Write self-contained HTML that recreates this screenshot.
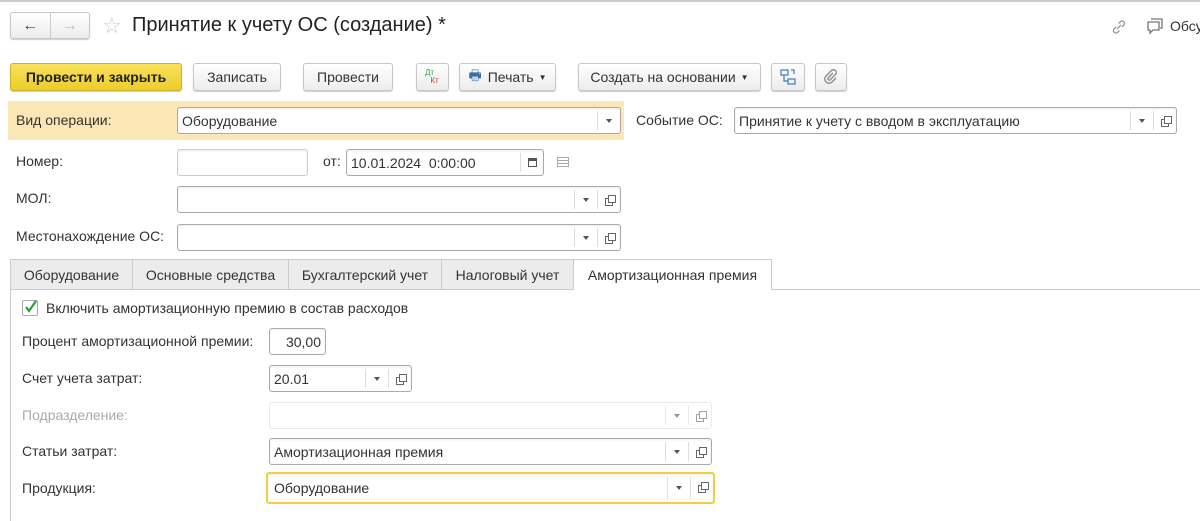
<!DOCTYPE html>
<html><head><meta charset="utf-8"><style>
*{box-sizing:border-box;margin:0;padding:0}
body{width:1200px;height:521px;background:#fff;position:relative;overflow:hidden;font-family:"Liberation Sans",Arial,sans-serif;font-size:14px;color:#333}
.a{position:absolute}
.btn{position:absolute;border:1px solid #c8c8c8;border-radius:3px;background:linear-gradient(#fff,#ececec);box-shadow:0 1px 1px rgba(0,0,0,.2);display:flex;align-items:center;justify-content:center;font-size:14px;color:#333}
.inp{position:absolute;border:1px solid #aaa;border-radius:3px;background:#fff;height:27px;display:flex;align-items:center;padding-left:4px;font-size:14px;color:#333;box-shadow:inset 0 1px 2px rgba(0,0,0,.08)}
.dd{position:absolute;top:3px;bottom:3px;width:23px;border-left:1px solid #ddd;display:flex;align-items:center;justify-content:center}
.dd::after{content:"";border-left:3px solid transparent;border-right:3px solid transparent;border-top:4px solid #555}
.op{position:absolute;top:3px;bottom:3px;width:23px;border-left:1px solid #ddd}
.op::before{content:"";position:absolute;left:7px;top:8px;width:6px;height:6px;border:1px solid #666}
.op::after{content:"";position:absolute;left:10px;top:5px;width:6px;height:6px;border:1px solid #666;background:#fff}
.lbl{position:absolute;font-size:14px;color:#333}
.tab{position:absolute;top:259px;height:30px;border:1px solid #ccc;border-bottom:none;background:#ececec;display:flex;align-items:center;justify-content:center;font-size:14px;color:#333}
</style></head><body>
<div class="a" style="left:0;top:0;width:1200px;height:2px;background:#ccc"></div>
<div class="btn" style="left:10px;top:12px;width:80px;height:27px;justify-content:flex-start">
 <span style="width:39px;text-align:center;font-size:16px;color:#444">&#8592;</span><span style="width:1px;height:25px;background:#ccc"></span><span style="width:39px;text-align:center;font-size:16px;color:#bbb">&#8594;</span></div>
<div class="a" style="left:102px;top:13px;font-size:22px;color:#ccc">&#9734;</div>
<div class="a" style="left:132px;top:14px;font-size:20px;color:#222">Принятие к учету ОС (создание) *</div>
<svg class="a" style="left:1110px;top:18px" width="18" height="18" viewBox="0 0 18 18" fill="none" stroke="#999" stroke-width="1.3"><path d="M7 11l4-4M6 9l-2 2a2.5 2.5 0 003.5 3.5l2-2M12 9l2-2a2.5 2.5 0 00-3.5-3.5l-2 2"/></svg>
<svg class="a" style="left:1145px;top:17px" width="20" height="18" viewBox="0 0 20 18" fill="none" stroke="#777" stroke-width="1.3"><path d="M6 2h11v9h-2M3 5h11v8H8l-3 3v-3H3z"/></svg>
<div class="a" style="left:1170px;top:18px;font-size:14px;color:#333">Обсу</div>

<div class="btn" style="left:10px;top:63px;width:172px;height:28px;background:linear-gradient(#f9e15a,#eccd2c);border-color:#cfb223;font-weight:bold;color:#222">Провести и закрыть</div>
<div class="btn" style="left:193px;top:63px;width:88px;height:28px">Записать</div>
<div class="btn" style="left:303px;top:63px;width:90px;height:28px">Провести</div>
<div class="btn" style="left:416px;top:63px;width:33px;height:28px;flex-direction:column;font-size:8px;line-height:8px"><span style="color:#3a3;margin-left:-6px">Дт</span><span style="color:#d33;margin-left:4px">Кт</span></div>
<div class="btn" style="left:459px;top:63px;width:97px;height:28px"><span style="color:#3b6ea5;margin-right:6px">&#128438;</span>Печать <span style="font-size:8px;margin-left:5px">&#9660;</span></div>
<div class="btn" style="left:578px;top:63px;width:183px;height:28px">Создать на основании <span style="font-size:8px;margin-left:5px">&#9660;</span></div>
<div class="btn" style="left:771px;top:63px;width:34px;height:28px"><svg width="18" height="18" viewBox="0 0 18 18" fill="none" stroke="#3b7bc0" stroke-width="1.2"><rect x="2" y="2" width="7" height="5"/><rect x="9" y="11" width="7" height="5"/><path d="M5 7v6h4M12 2h3v4"/></svg></div>
<div class="btn" style="left:815px;top:63px;width:32px;height:28px"><svg width="16" height="16" viewBox="0 0 16 16" fill="none" stroke="#888" stroke-width="1.3"><path d="M10 4l-5 5a1.5 1.5 0 002 2l6-6a3 3 0 00-4-4L3 7a4 4 0 006 6l4-4"/></svg></div>

<div class="a" style="left:8px;top:101px;width:616px;height:39px;background:#fbe7b5"></div>
<div class="lbl" style="left:16px;top:112px">Вид операции:</div>
<div class="inp" style="left:177px;top:107px;width:444px">Оборудование<div class="dd" style="right:0"></div></div>
<div class="lbl" style="left:636px;top:112px">Событие ОС:</div>
<div class="inp" style="left:734px;top:107px;width:443px">Принятие к учету с вводом в эксплуатацию<div class="dd" style="right:23px"></div><div class="op" style="right:0"></div></div>

<div class="lbl" style="left:16px;top:153px">Номер:</div>
<div class="inp" style="left:177px;top:149px;width:131px;border-color:#ccc"></div>
<div class="lbl" style="left:323px;top:153px">от:</div>
<div class="inp" style="left:346px;top:149px;width:198px">10.01.2024&nbsp; 0:00:00<div class="a" style="right:0;top:3px;bottom:3px;width:23px;border-left:1px solid #ddd;display:flex;align-items:center;justify-content:center"><div style="width:9px;height:9px;border:1px solid #555;border-top-width:3px"></div></div></div>
<div class="a" style="left:557px;top:157px;width:12px;height:10px;border:1px solid #aaa;background:repeating-linear-gradient(#fff 0 2px,#aaa 2px 3px)"></div>

<div class="lbl" style="left:16px;top:190px">МОЛ:</div>
<div class="inp" style="left:177px;top:186px;width:444px"><div class="dd" style="right:23px"></div><div class="op" style="right:0"></div></div>
<div class="lbl" style="left:16px;top:228px">Местонахождение ОС:</div>
<div class="inp" style="left:177px;top:224px;width:444px"><div class="dd" style="right:23px"></div><div class="op" style="right:0"></div></div>

<div class="a" style="left:10px;top:289px;width:1190px;height:1px;background:#ccc"></div>
<div class="a" style="left:10px;top:289px;width:1px;height:232px;background:#ccc"></div>
<div class="tab" style="left:10px;width:123px">Оборудование</div>
<div class="tab" style="left:132px;width:157px">Основные средства</div>
<div class="tab" style="left:288px;width:154px">Бухгалтерский учет</div>
<div class="tab" style="left:441px;width:133px">Налоговый учет</div>
<div class="tab" style="left:573px;width:199px;background:#fff;height:31px">Амортизационная премия</div>

<div class="a" style="left:22px;top:300px;width:16px;height:16px;border:1px solid #aaa;border-radius:2px;background:#fff"></div>
<svg class="a" style="left:23px;top:299px" width="16" height="16" viewBox="0 0 16 16"><path d="M3 8l3 4 7-10" fill="none" stroke="#2e9e3a" stroke-width="2.2"/></svg>
<div class="lbl" style="left:46px;top:300px">Включить амортизационную премию в состав расходов</div>

<div class="lbl" style="left:22px;top:333px">Процент амортизационной премии:</div>
<div class="inp" style="left:269px;top:328px;width:57px;justify-content:flex-end;padding-right:4px">30,00</div>
<div class="lbl" style="left:22px;top:370px">Счет учета затрат:</div>
<div class="inp" style="left:269px;top:365px;width:143px">20.01<div class="dd" style="right:23px"></div><div class="op" style="right:0"></div></div>
<div class="lbl" style="left:22px;top:407px;color:#aaa">Подразделение:</div>
<div class="inp" style="left:269px;top:402px;width:443px;border-color:#ddd;box-shadow:none;opacity:.6"><div class="dd" style="right:23px"></div><div class="op" style="right:0"></div></div>
<div class="lbl" style="left:22px;top:443px">Статьи затрат:</div>
<div class="inp" style="left:269px;top:438px;width:443px">Амортизационная премия<div class="dd" style="right:23px"></div><div class="op" style="right:0"></div></div>
<div class="lbl" style="left:22px;top:480px">Продукция:</div>
<div class="inp" style="left:266px;top:472px;width:449px;height:32px;border:2px solid #f0cf45;padding-left:6px">Оборудование<div class="dd" style="right:23px"></div><div class="op" style="right:0"></div></div>
</body></html>
